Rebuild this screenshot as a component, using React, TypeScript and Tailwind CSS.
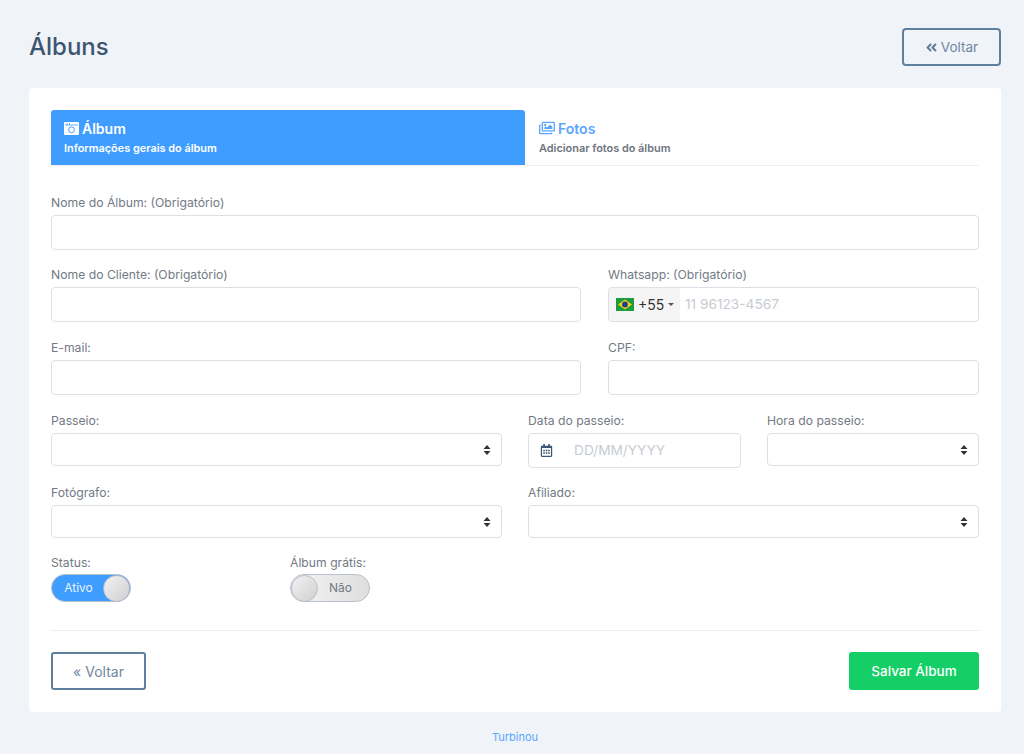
import { FaAngleDoubleLeft, FaRegCalendarAlt, FaRegImages } from "react-icons/fa";

const font = { fontFamily: "Inter, 'Open Sans', sans-serif" };

function Label({ children, tight }: { children: React.ReactNode; tight?: boolean }) {
  return (
    <label className={`block h-[13px] text-[12.2px] leading-[13px] text-[#727a85] ${tight ? "mb-[5px]" : "mb-[6px]"}`}>
      {children}
    </label>
  );
}

function TextInput({ label }: { label: string }) {
  return (
    <div>
      <Label>{label}</Label>
      <input className="block w-full h-[35px] bg-white border border-[#dcdfe6] rounded-[4px]" />
    </div>
  );
}

function SelectField({ label }: { label: string }) {
  return (
    <div>
      <Label>{label}</Label>
      <div className="flex items-center justify-end h-[33px] px-[14px] pr-[10px] bg-white border border-[#dcdfe6] rounded-[4px]">
        <svg width="8" height="12" viewBox="0 0 8 12" className="text-[#333]">
          <path d="M4 1 7.5 5h-7zM4 11 .5 7h7z" fill="currentColor" />
        </svg>
      </div>
    </div>
  );
}

function AlbumIcon() {
  return (
    <svg width="15" height="13" viewBox="0 0 15 13" className="mr-[3px] text-white">
      <rect width="15" height="13" rx="1" fill="currentColor" />
      <path d="M1 3h13M3 1v2M5.5 1v2" stroke="#3f9dff" strokeWidth="0.8" />
      <circle cx="7.5" cy="7.8" r="2.9" fill="none" stroke="#3f9dff" strokeWidth="1" />
    </svg>
  );
}

function BrazilFlag() {
  return (
    <svg width="18" height="13" viewBox="0 0 18 13">
      <rect width="18" height="13" fill="#1d9c3f" />
      <path d="M9 1.5 16 6.5 9 11.5 2 6.5z" fill="#f7d117" />
      <circle cx="9" cy="6.5" r="2.9" fill="#1f3f8f" />
    </svg>
  );
}

function Toggle({ on, text }: { on: boolean; text: string }) {
  return (
    <div
      className={`flex items-center w-[80px] h-[28px] rounded-full border border-[#b8c0cc] text-[12px] ${
        on
          ? "bg-[#3f9dff] text-[#e8f3ff]"
          : "flex-row-reverse bg-gradient-to-r from-[#f5f5f5] to-[#dedede] text-[#727a85]"
      }`}
    >
      <span className={`flex-1 text-center ${on ? "pl-[2px]" : "pr-[6px]"}`}>{text}</span>
      <span className="w-[27px] h-[27px] rounded-full border border-[#b8c0cc] bg-gradient-to-br from-[#f3f3f3] to-[#cfcfcf]" />
    </div>
  );
}

export default function App() {
  return (
    <div style={font} className="min-h-[754px] bg-[#f0f3f8] pr-[23px] pt-[28px] pl-[29px] text-[#6b7480]">
      {/* HEADER */}
      <div className="flex items-center justify-between h-[38px] mb-[22px]">
        <h1 className="text-[24px] font-medium text-[#3c5570]">Álbuns</h1>
        <button className="flex items-center justify-center gap-[3px] w-[99px] h-[38px] border-2 border-[#5f7f9f] rounded-[4px] text-[13.5px] text-[#6f87a0]">
          <FaAngleDoubleLeft size={13} className="text-[#5f7f9f]" />
          Voltar
        </button>
      </div>

      {/* CARD */}
      <div className="w-[972px] h-[624px] bg-white rounded-[4px] p-[22px]">
        {/* TABS */}
        <div className="flex h-[56px] border-b border-[#f0f0f0] mb-[30px]">
          <div className="w-[474px] h-[55px] bg-[#3f9dff] rounded-t-[3px] px-[13px] pt-[9px] text-white">
            <div className="flex items-center h-[18px] text-[14px] font-semibold"><AlbumIcon />Álbum</div>
            <div className="mt-[3px] text-[10.9px] font-semibold">Informações gerais do álbum</div>
          </div>
          <div className="flex-1 px-[14px] pt-[9px]">
            <div className="flex items-center h-[18px] text-[14px] font-semibold text-[#5aa6ff]">
              <FaRegImages size={16} className="mr-[3px]" />
              Fotos
            </div>
            <div className="mt-[3px] text-[10.9px] font-semibold text-[#6f7680]">Adicionar fotos do álbum</div>
          </div>
        </div>

        {/* FORM */}
        <div className="mb-[18px]"><TextInput label="Nome do Álbum: (Obrigatório)" /></div>

        <div className="grid grid-cols-[530px_371px] gap-x-[27px] gap-y-[19px] mb-[19px]">
          <TextInput label="Nome do Cliente: (Obrigatório)" />
          <div>
            <Label>Whatsapp: (Obrigatório)</Label>
            <div className="flex h-[35px] border border-[#dcdfe6] rounded-[4px] overflow-hidden">
              <div className="flex items-center gap-[4px] w-[71px] pl-[7px] bg-[#f5f5f5] text-[14px] text-[#333]">
                <BrazilFlag />
                +55
                <span className="w-0 h-0 border-x-[3px] border-x-transparent border-t-[3px] border-t-[#555]" />
              </div>
              <span className="flex items-center pl-[5px] text-[13.7px] text-[#c8ccd2]">11 96123-4567</span>
            </div>
          </div>
          <TextInput label="E-mail:" />
          <TextInput label="CPF:" />
        </div>

        <div className="grid grid-cols-[451px_213px_212px] gap-x-[26px] mb-[18px]">
          <SelectField label="Passeio:" />
          <div>
            <Label>Data do passeio:</Label>
            <div className="flex items-center h-[35px] pl-[11px] border border-[#dcdfe6] rounded-[4px] text-[13.7px] text-[#c8ccd2]">
              <FaRegCalendarAlt size={13} className="text-[#3c5570] mr-[21px]" />
              DD/MM/YYYY
            </div>
          </div>
          <SelectField label="Hora do passeio:" />
        </div>

        <div className="grid grid-cols-[451px_451px] gap-x-[26px] mb-[18px]">
          <SelectField label="Fotógrafo:" />
          <SelectField label="Afiliado:" />
        </div>

        <div className="flex gap-[159px]">
          <div>
            <Label tight>Status:</Label>
            <Toggle on text="Ativo" />
          </div>
          <div>
            <Label tight>Álbum grátis:</Label>
            <Toggle on={false} text="Não" />
          </div>
        </div>

        <div className="h-px bg-[#ececec] mt-[28px] mb-[21px]" />

        {/* ACTIONS */}
        <div className="flex justify-between">
          <button className="w-[95px] h-[38px] border-2 border-[#5f7f9f] rounded-[3px] text-[14px] text-[#6f87a0]">« Voltar</button>
          <button className="w-[130px] h-[38px] bg-[#14cf66] rounded-[3px] text-[13.5px] font-medium text-white">Salvar Álbum</button>
        </div>
      </div>

      <div className="w-[972px] mt-[17px] text-center text-[11px] text-[#5aa6ff]">Turbinou</div>
    </div>
  );
}
